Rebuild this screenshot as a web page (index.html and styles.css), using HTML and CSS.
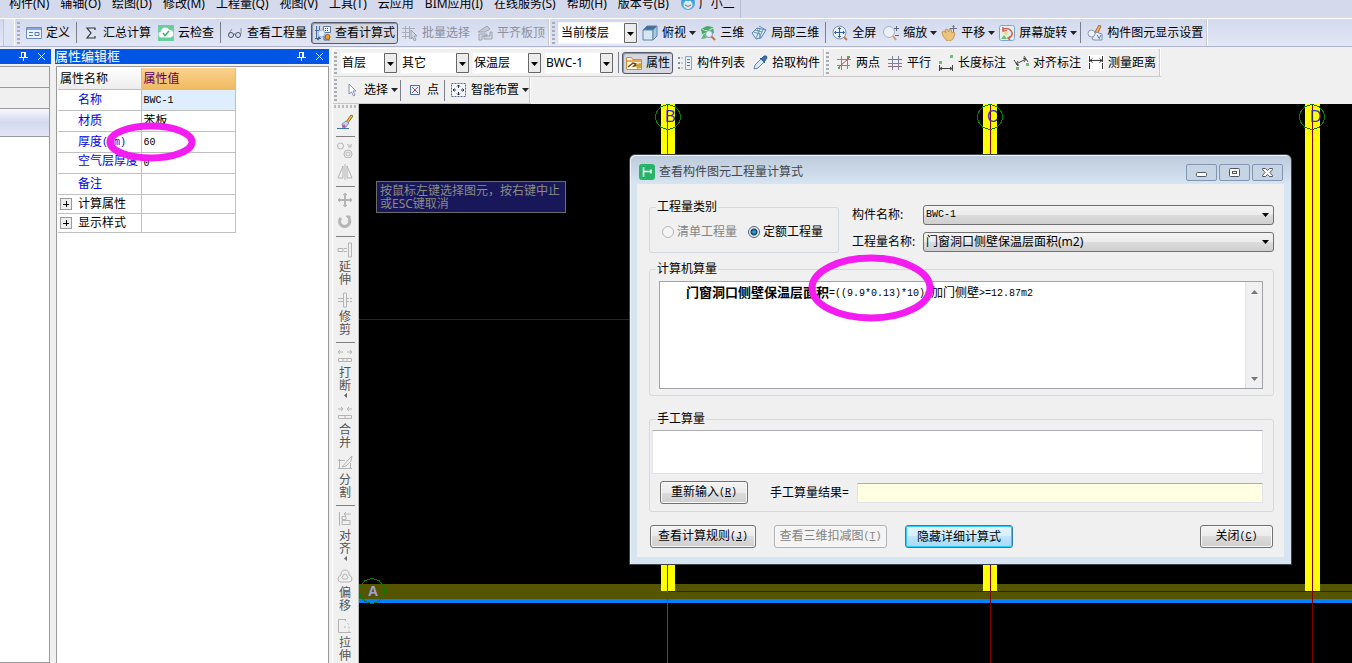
FILE: index.html
```html
<!DOCTYPE html>
<html lang="zh-CN">
<head>
<meta charset="utf-8">
<title>查看构件图元工程量计算式</title>
<link rel="stylesheet" href="styles.css">
</head>
<body>
<div class="app">
  <header class="menubar">
    <nav class="menu">
      <button>构件(N)</button><button>辅轴(O)</button><button>绘图(D)</button><button>修改(M)</button><button>工程量(Q)</button><button>视图(V)</button><button>工具(T)</button><button>云应用</button><button>BIM应用(I)</button><button>在线服务(S)</button><button>帮助(H)</button><button>版本号(B)</button>
      <button class="user"><svg class="i" viewBox="0 0 16 16"><circle cx="8" cy="8" r="7" fill="#4aa8e0"/><path d="M1 4l3 1M15 4l-3 1" stroke="#2f86c8" stroke-width="2"/><ellipse cx="8" cy="10" rx="4.500" ry="4" fill="#cfeaf8"/><path d="M5 10q3 3 6 0" fill="none" stroke="#d0504a"/><circle cx="6" cy="7" r="1" fill="#fff"/><circle cx="10" cy="7" r="1" fill="#fff"/></svg>广小二</button>
    </nav>
  </header>

  <div class="toolbar main-bar">
    <span class="stub"></span>
    <span class="grip"></span>
    <button class="tool"><svg class="i" viewBox="0 0 16 16"><path fill="#eef4fd" stroke="#6a8cc4" d="M.5 2.500h15v11H.5z"/><path d="M1 3h14v2H1z" fill="#86a8dc"/><path d="M3 7.500h4M3 10.500h4M9 7.500h4v3H9z" stroke="#5878a8" fill="none"/></svg>定义</button>
    <span class="sep"></span>
    <button class="tool"><svg class="i" viewBox="0 0 16 16"><path d="M12 5V3H4l4 5-4 5h8v-2" fill="none" stroke="#333" stroke-width="1.200"/></svg>汇总计算</button>
    <button class="tool"><svg class="i" viewBox="0 0 16 16"><path d="M0 0h16v16H0z" fill="#67cf9c"/><path d="M4 12.500a3 3 0 0 1-1-6 4.500 4.500 0 0 1 8.500-1.500 3.800 3.800 0 0 1 1 7.500z" fill="#fff"/><path d="M5 8l2 2.500L11 6" fill="none" stroke="#3fb27b" stroke-width="1.500"/></svg>云检查</button>
    <span class="sep"></span>
    <button class="tool"><svg class="i" viewBox="0 0 16 16"><path d="M5 4L1.500 9M14 3v6" stroke="#8890a0" fill="none"/><circle cx="4" cy="10" r="2.500" fill="#d6e2f2" stroke="#4a5468"/><circle cx="11" cy="10" r="2.500" fill="#d6e2f2" stroke="#4a5468"/><path d="M6.500 9.500q1-1 2 0" stroke="#4a5468" fill="none"/></svg>查看工程量</button>
    <button class="tool pressed"><svg class="i" viewBox="0 0 16 16"><path d="M1.500 1v13M0 13.500h6M4.500 1v4M0 5.500h5" stroke="#3f6ea8" fill="none"/><path d="M8.500 1.500h7v6h-7z" fill="#f3f6fb" stroke="#5878a8"/><path d="M10 3.500h1m1 0h1M10 5.500h1m1 0h1" stroke="#345"/><circle cx="6.500" cy="8.500" r="3.500" fill="#e3eefa" stroke="#9ab0d0"/><path d="M2.500 15l2-3" stroke="#36609c" stroke-width="2"/><path d="M9 11v4h6" stroke="#3f6ea8" fill="none"/><circle cx="12.500" cy="12" r="2.500" fill="#ee9a28" stroke="#9a5c18"/></svg>查看计算式</button>
    <button class="tool" disabled><svg class="i" viewBox="0 0 16 16"><path d="M0 3.500h13M0 7.500h8M0 11.500h8M3.500 1v13M7.500 1v13" stroke="#a9adbb" fill="none"/><path d="M9 5l6 6H12l2 4-2 .5-1.500-3.500L9 14z" fill="#d5d8e2" stroke="#9a9eac"/></svg>批量选择</button>
    <button class="tool" disabled><svg class="i" viewBox="0 0 16 16"><path d="M1 7l9-6 3 3-5 3z" fill="#c6cad6" stroke="#9ea2b0"/><path d="M2 9h8v2H5v4H2zM7 14h8V7h-2v4H7z" fill="#d4d7e0" stroke="#9ea2b0"/></svg>平齐板顶</button>
    <span class="edge"></span>
    <span class="grip"></span>
    <select class="combo floor" aria-label="楼层范围"><option>当前楼层</option></select>
    <button class="tool"><svg class="i" viewBox="0 0 16 16"><path d="M1 5l4-4h10l-4 4z" fill="#3f6f9e" stroke="#587c9c"/><path d="M1 5h10v10H1z" fill="#d5e7f3" stroke="#6288a6"/><path d="M11 5l4-4v10l-4 4z" fill="#a9c8dc" stroke="#6288a6"/></svg>俯视<svg class="caret" viewBox="0 0 7 4"><path d="M0 0h7L3.500 4z"/></svg></button>
    <button class="tool"><svg class="i" viewBox="0 0 16 16"><path d="M1 4l6-3 6 1 1 6-6 3-6-2z" fill="#45ad63"/><path d="M2 4q5 4 11-1M1 10q6-1 11-7" stroke="#bfe6c6" fill="none"/><circle cx="9" cy="9" r="3.500" fill="#e4f0fa" stroke="#8097b4"/><path d="M11.500 11.500L15 15" stroke="#bb7547" stroke-width="2"/><path d="M1 14l3-5 3 4z" fill="#5cb56e"/></svg>三维</button>
    <button class="tool"><svg class="i" viewBox="0 0 16 16"><path d="M1 8l5-5 9 2-5 8-5 1z" fill="#dbe9f4" stroke="#5a86ae"/><path d="M4 5l7 2M2.500 7L9 9M9 4l-4 9M12 5l-4 8M6 3l4 10M8 1l7 4" stroke="#6c95ba" fill="none"/></svg>局部三维</button>
    <span class="sep"></span>
    <button class="tool"><svg class="i" viewBox="0 0 16 16"><circle cx="7.500" cy="7.500" r="6.500" fill="#e9f1fa" stroke="#8594b0"/><path d="M7.500 2.500v10M2.500 7.500h10M6 4l1.500-1.500L9 4M6 11l1.500 1.500L9 11M4 6L2.500 7.500 4 9M11 6l1.500 1.500L11 9" stroke="#375f9e" fill="none"/><path d="M12 12l3 3" stroke="#c27a46" stroke-width="2"/></svg>全屏</button>
    <button class="tool"><svg class="i" viewBox="0 0 16 16"><circle cx="6" cy="7" r="5.500" fill="#eaf1fa" stroke="#a9b2c4"/><path d="M10 11l3 4" stroke="#d29a68" stroke-width="2"/><path d="M13.500 1v5M11 3.500h5M12 10.500h4" stroke="#59647c" fill="none"/></svg>缩放<svg class="caret" viewBox="0 0 7 4"><path d="M0 0h7L3.500 4z"/></svg></button>
    <button class="tool"><svg class="i" viewBox="0 0 16 16"><path d="M1 7l2-1 2 2-1-3 2-1 2 3 0-3h2l1 4 2-1 1 2-2 5-3 2H6l-4-5z" fill="#ecc27d" stroke="#c49a5c"/><path d="M12.500 0v7M9 3.500h7M11.500 1.500l1-1 1 1" stroke="#69707e" fill="none"/></svg>平移<svg class="caret" viewBox="0 0 7 4"><path d="M0 0h7L3.500 4z"/></svg></button>
    <button class="tool"><svg class="i" viewBox="0 0 16 16"><rect x=".5" y=".5" width="15" height="15" rx="2" fill="#e3f0ec" stroke="#78a8cc"/><path d="M3 5a6 5 0 1 1 7 8M4 2v4h4M12 11l-3 2 2 2" stroke="#e25b50" fill="none" stroke-width="1.500"/><circle cx="7" cy="8" r="2" fill="#f3d98e"/><path d="M2 14l3-4 3 4z" fill="#6fba75"/></svg>屏幕旋转<svg class="caret" viewBox="0 0 7 4"><path d="M0 0h7L3.500 4z"/></svg></button>
    <span class="sep"></span>
    <button class="tool"><svg class="i" viewBox="0 0 16 16"><path d="M8 7l4-7 2 1-3 7z" fill="#eeb061" stroke="#a86c38"/><path d="M5 14l4-7 6 2v6H7z" fill="#e6edf5" stroke="#8390a8"/><circle cx="4.500" cy="8.500" r="3.500" fill="#eaf4fa" stroke="#8e9ab0"/><path d="M10 10l2 3m2-3l-2 4" stroke="#4778b8"/></svg>构件图元显示设置</button>
    <span class="edge"></span>
  </div>

  <div class="workspace">
    <aside class="dock nav-dock">
      <h2 class="dock-title"><span></span><button aria-label="固定"><svg viewBox="0 0 9 9"><path d="M2.500 0v5M5.500 0v5M6.500 0v5M2 .5h5M0 5.500h9M4.500 6v3" stroke="#fff" fill="none"/></svg></button><button aria-label="关闭"><svg viewBox="0 0 9 9"><path d="M1 1l7 7M8 1L1 8" stroke="#fff" fill="none"/></svg></button></h2>
      <div class="nav-body"><button class="nav-row" aria-label="工程设置"></button><button class="nav-row" aria-label="绘图输入"></button><button class="nav-tools" aria-label="工具"></button><div class="nav-list"></div></div>
    </aside>

    <aside class="dock prop-dock">
      <h2 class="dock-title"><span>属性编辑框</span><button aria-label="固定"><svg viewBox="0 0 9 9"><path d="M2.500 0v5M5.500 0v5M6.500 0v5M2 .5h5M0 5.500h9M4.500 6v3" stroke="#fff" fill="none"/></svg></button><button aria-label="关闭"><svg viewBox="0 0 9 9"><path d="M1 1l7 7M8 1L1 8" stroke="#fff" fill="none"/></svg></button></h2>
      <div class="prop-body">
        <table class="props">
          <thead><tr><th>属性名称</th><th class="hot">属性值</th></tr></thead>
          <tbody>
            <tr><td class="key">名称</td><td class="selected"><span class="mono">BWC-1</span></td></tr>
            <tr><td class="key">材质</td><td>苯板</td></tr>
            <tr><td class="key">厚度<span class="mono">(mm)</span></td><td><span class="mono">60</span></td></tr>
            <tr><td class="key air">空气层厚度</td><td><span class="mono">0</span></td></tr>
            <tr><td class="key">备注</td><td></td></tr>
            <tr class="group"><td><button class="plus" aria-label="展开计算属性"></button>计算属性</td><td></td></tr>
            <tr class="group"><td><button class="plus" aria-label="展开显示样式"></button>显示样式</td><td></td></tr>
          </tbody>
        </table>
        <svg class="mark mark-prop" viewBox="0 0 90 40"><ellipse cx="45" cy="20" rx="41" ry="16"/></svg>
      </div>
    </aside>

    <main class="work">
      <div class="toolbar sub-bar">
        <span class="grip"></span>
        <select class="combo w-s" aria-label="楼层"><option>首层</option></select>
        <select class="combo w-m" aria-label="构件类型"><option>其它</option></select>
        <select class="combo w-m" aria-label="构件"><option>保温层</option></select>
        <select class="combo w-m" aria-label="名称"><option>BWC-1</option></select>
        <span class="sep"></span>
        <button class="tool pressed"><svg class="i" viewBox="0 0 16 16"><path d="M.5 2.500h5l1 2h9v10H.5z" fill="#fff6dc" stroke="#d08a38"/><path d="M1 5h14v2H1z" fill="#f0a850"/><path d="M2 12l5-4 3 1-2 2 5-1" stroke="#6a4a24" fill="none" stroke-width="1.500"/><path d="M10 9l5-1v5l-4 1z" fill="#c9a63c"/></svg>属性</button>
        <button class="tool"><svg class="i" viewBox="0 0 16 16"><path d="M1 2h2v2H1zM1 7h2v2H1zM1 12h2v2H1z" fill="#7d8cab"/><path d="M4 3h2M4 8h2M4 13h2" stroke="#9aa6be"/><path d="M8.500 1.500h6v13h-6z" fill="#e8eff9" stroke="#8ea6cc"/><path d="M10 4.500h3M10 7.500h3M10 10.500h3" stroke="#5d7fb8"/></svg>构件列表</button>
        <button class="tool"><svg class="i" viewBox="0 0 16 16"><path d="M2 14l1-4 6-6 3 3-6 6z" fill="#dbe8f5" stroke="#5f86b8"/><path d="M8 3l5 5M9 4l3-3q3-1 3 2l-3 4z" fill="#3e6fae" stroke="#2f5d9c"/></svg>拾取构件</button>
        <span class="edge"></span>
        <span class="grip"></span>
        <button class="tool"><svg class="i" viewBox="0 0 16 16"><path d="M1 4.500h14M1 10.500h13M5.500 1v14M11.500 1v13" stroke="#8084a8" fill="none"/><path d="M2 13L14 2" stroke="#b85048"/><path d="M2 12h2v2H2zM12 1h2v2h-2z" fill="#57a35b"/></svg>两点</button>
        <button class="tool"><svg class="i" viewBox="0 0 16 16"><path d="M1 4.500h14M1 11.500h14" stroke="#a0606c"/><path d="M1 8.500h14M5.500 1v14M11.500 1v14" stroke="#7a82ac" fill="none"/></svg>平行</button>
        <button class="tool"><svg class="i" viewBox="0 0 16 16"><path d="M1.500 10v6M14.500 10v6M2 13.500h12M4 12l-2 1.500L4 15M12 12l2 1.500-2 1.500" stroke="#444" fill="none"/><path d="M1 6h3v3H1zM12 0h3v3h-3z" fill="#69c274"/></svg>长度标注</button>
        <button class="tool"><svg class="i" viewBox="0 0 16 16"><path d="M1 5l4 6M11 1l4 6M3 9l10-5M5 6L3 9l3 1M11 7l2-3-3-1" stroke="#444" fill="none"/><path d="M3 12h3v3H3zM13 8h3v3h-3z" fill="#69c274"/></svg>对齐标注</button>
        <button class="tool"><svg class="i" viewBox="0 0 16 16"><path d="M0 0h16v16H0z" fill="#fff"/><path d="M1.500 1v14M14.500 1v14" stroke="#333" stroke-dasharray="6 1"/><path d="M2 5.500h12M4.500 3.500L2 5.500l2.500 2M11.500 3.500l2.500 2-2.500 2" stroke="#333" fill="none"/></svg>测量距离</button>
        <span class="edge"></span>
      </div>
      <div class="toolbar draw-bar">
        <span class="grip"></span>
        <button class="tool"><svg class="i" viewBox="0 0 16 16"><path d="M5 2v10l2.500-2 2 4 1.500-1-2-4h3z" fill="#fff" stroke="#8390b8"/></svg>选择<svg class="caret" viewBox="0 0 7 4"><path d="M0 0h7L3.500 4z"/></svg></button>
        <span class="sep"></span>
        <button class="tool"><svg class="i" viewBox="0 0 16 16"><path d="M3.500 3.500h9v9h-9z" fill="#eef" stroke="#5468a8"/><path d="M5 5l6 6M11 5l-6 6" stroke="#5468a8"/><path d="M7 7h2v2H7z" fill="#d84040"/></svg>点</button>
        <span class="sep"></span>
        <button class="tool"><svg class="i" viewBox="0 0 16 16"><path d="M.5 1.500h14v13H.5z" fill="#f4f7fb" stroke="#556a8c" stroke-dasharray="2 1"/><path d="M7.500 3v3M6 4.500L7.500 3 9 4.500M7.500 13v-3M6 11.500L7.500 13 9 11.500M2 8h3M3.500 6.500L2 8l1.500 1.500M13 8h-3M11.500 6.500L13 8l-1.500 1.500" stroke="#2c3440" fill="none"/></svg>智能布置<svg class="caret" viewBox="0 0 7 4"><path d="M0 0h7L3.500 4z"/></svg></button>
        <span class="edge"></span>
      </div>

      <div class="stage">
        <div class="edit-bar">
          <span class="hgrip"></span>
          <button class="edit" aria-label="格式刷"><svg class="i" viewBox="0 0 16 16"><path d="M9 8l5-7 2 1-5 7z" fill="#f0c040" stroke="#907020"/><path d="M5 10l4-3 3 2-3 4-3 1z" fill="#c8d4ea" stroke="#8090b0"/><circle cx="7" cy="12" r="1.500" fill="#cf4bb0"/><path d="M0 14.500h12" stroke="#3674b4"/></svg></button>
          <hr>
          <button class="edit" aria-label="复制"><svg class="i g" viewBox="0 0 16 16"><circle cx="3.500" cy="4" r="3"/><circle cx="11" cy="12" r="4"/><circle cx="11" cy="12" r="2"/><path d="M10 2l4 3M14 2v3h-3"/></svg></button>
          <button class="edit" aria-label="镜像"><svg class="i g" viewBox="0 0 16 16"><path d="M6 2v12H1zM10 2v12h5zM8 0v16"/></svg></button>
          <hr>
          <button class="edit" aria-label="移动"><svg class="i g" viewBox="0 0 16 16"><path stroke-width="2" d="M8 2v12M2 8h12"/><path d="M6 3l2-2 2 2M6 13l2 2 2-2M3 6L1 8l2 2M13 6l2 2-2 2"/></svg></button>
          <button class="edit" aria-label="旋转"><svg class="i g" viewBox="0 0 16 16"><path stroke-width="3" d="M4 4a5 5 0 1 0 8 1"/><path fill="#b4b4b4" d="M9 2h4v4z"/></svg></button>
          <hr>
          <button class="edit"><svg class="i g" viewBox="0 0 16 16"><path d="M1 6.500h5v3H1zM7 6.500h3M7 9.500h3"/><path d="M11.500 1v14h3V1z"/></svg><span>延</span><span>伸</span></button>
          <button class="edit"><svg class="i g" viewBox="0 0 16 16"><path d="M1 6.500h5M1 9.500h5M10 6.500h2m1 0h2M10 9.500h2m1 0h2M6.500 1v14h3V1z"/></svg><span>修</span><span>剪</span></button>
          <hr>
          <button class="edit"><svg class="i g" viewBox="0 0 16 16"><path d="M1 4h5M3 2L1 4l2 2M10 4h5M13 2l2 2-2 2M1.500 10.500h13v3h-13zM6 10v4M10 10v4"/></svg><span>打</span><span>断</span><svg class="side" viewBox="0 0 3 7"><path d="M3 1v5L0 3.500z"/></svg></button>
          <button class="edit"><svg class="i g" viewBox="0 0 16 16"><path d="M1 4h5M4 2l2 2-2 2M10 4h5M12 2l-2 2 2 2M1.500 10.500h13v3h-13zM8 10v4"/></svg><span>合</span><span>并</span></button>
          <button class="edit"><svg class="i g" viewBox="0 0 16 16"><path d="M1 5.500h7M2.500 4v10M1 13.500h14M5 12l7-8 3-3-1 5-5 5zM13.500 8v6"/></svg><span>分</span><span>割</span></button>
          <hr>
          <button class="edit"><svg class="i g" viewBox="0 0 16 16"><path d="M2.500 1v14M5 8.500h4v-3H5zM5 9.500h8v4H5zM7 3h7M9 1L7 3l2 2"/></svg><span>对</span><span>齐</span><svg class="side" viewBox="0 0 3 7"><path d="M3 1v5L0 3.500z"/></svg></button>
          <button class="edit"><svg class="i g" viewBox="0 0 16 16"><path d="M1 11q0-3 3-4 0-5 4-5t4 5q3 1 3 4 0 3-3 3H4q-3 0-3-3z"/><path d="M5 10q0-1 1-2 0-2 2-2t2 2q1 1 1 2l-1 1H6z"/></svg><span>偏</span><span>移</span></button>
          <button class="edit"><svg class="i g" viewBox="0 0 16 16"><path d="M9 1.500H1.500v13H14"/><path stroke-dasharray="2 2" d="M8 2l4 5v7M7 9h4"/></svg><span>拉</span><span>伸</span></button>
        </div>

        <section class="canvas">
          <svg class="drawing" width="993" height="559" viewBox="0 0 993 559" shape-rendering="crispEdges">
            <path d="M302 0h14v487h-14zM624 0h14v487h-14zM946 0h15v487h-15z" fill="#ff0"/>
            <path d="M0 480h302v15H0zM316 480h308v15H316zM638 480h308v15H638zM961 480h32v15h-32zM302 487h14v8h-14zM624 487h14v8h-14zM946 487h15v8h-15z" fill="#550"/>
            <path d="M0 495h993v4H0z" fill="#0080ff"/>
            <path d="M0 215.500h300M309 487.500h684M631.500 0v559M953.500 0v559" stroke="#800000"/>
            <path d="M308.500 0v487M0 487.500h309" stroke="#f00"/>
            <path d="M308.500 488v71" stroke="green"/>
            <g fill="none" stroke="#008000">
              <path id="axis" d="M309 .5l7 2 4 5 2 5.500-2 5.500-4 5-7 2-7-2-4-5-2-5.500 2-5.500 4-5z"/>
              <use href="#axis" x="322"/><use href="#axis" x="644"/><use href="#axis" x="-296" y="474"/>
            </g>
            <g class="axis-text"><text x="306" y="18">B</text><text x="628" y="18">C</text><text x="951" y="18">D</text><text x="9" y="492" class="axis-a">A</text></g>
          </svg>
          <p class="hint">按鼠标左键选择图元，按右键中止<br>或ESC键取消</p>

          <section class="dialog" role="dialog" aria-labelledby="dlg-title">
            <header class="caption">
              <svg class="i" viewBox="0 0 16 16"><rect width="16" height="16" rx="3" fill="#25b567"/><path d="M4.500 3v10M5 7.500h7M12 5.500v4" stroke="#fff" fill="none" stroke-width="1.500"/></svg>
              <h1 id="dlg-title">查看构件图元工程量计算式</h1>
              <button aria-label="最小化"><svg viewBox="0 0 13 11"><rect x="1.500" y="5.500" width="10" height="4" rx="1"/></svg></button>
              <button aria-label="最大化"><svg viewBox="0 0 13 11"><rect x="1.500" y="1.500" width="10" height="8" rx="1"/><rect x="4.500" y="4.500" width="4" height="2"/></svg></button>
              <button aria-label="关闭窗口"><svg viewBox="0 0 13 11"><path d="M1.500 1.500h3l2 2 2-2h3v1L9 5.500l2.500 3v1h-3l-2-2-2 2h-3v-1L4 5.500l-2.500-3z"/></svg></button>
            </header>
            <div class="dlg-body">
              <div class="top-row">
                <fieldset class="kind">
                  <legend>工程量类别</legend>
                  <label class="off"><input type="radio" name="kind" disabled>清单工程量</label>
                  <label><input type="radio" name="kind" checked>定额工程量</label>
                </fieldset>
                <div class="fields">
                  <label for="comp">构件名称:</label><select id="comp" class="mono"><option>BWC-1</option></select>
                  <label for="qty">工程量名称:</label><select id="qty"><option>门窗洞口侧壁保温层面积(m2)</option></select>
                </div>
              </div>
              <fieldset class="auto">
                <legend>计算机算量</legend>
                <div class="result">
                  <p><b>门窗洞口侧壁保温层面积</b><span class="mono">=((9.9*0.13)*10)&lt;</span>加门侧壁<span class="mono">&gt;=12.87m2</span></p>
                  <div class="scroll"><button aria-label="向上"><svg viewBox="0 0 7 4"><path d="M0 4h7L3.500 0z"/></svg></button><button aria-label="向下"><svg viewBox="0 0 7 4"><path d="M0 0h7L3.500 4z"/></svg></button></div>
                </div>
              </fieldset>
              <fieldset class="manual">
                <legend>手工算量</legend>
                <textarea aria-label="手工算量"></textarea>
                <div class="manual-row"><button class="btn">重新输入<span class="mono">(<u>R</u>)</span></button><label for="res">手工算量结果=</label><input id="res" type="text" readonly></div>
              </fieldset>
              <footer class="actions">
                <button class="btn b1">查看计算规则<span class="mono">(<u>J</u>)</span></button>
                <button class="btn b2" disabled>查看三维扣减图<span class="mono">(<u>T</u>)</span></button>
                <button class="btn b3 primary">隐藏详细计算式</button>
                <button class="btn b4">关闭<span class="mono">(<u>C</u>)</span></button>
              </footer>
            </div>
            <svg class="mark mark-dlg" viewBox="0 0 126 68"><ellipse cx="63" cy="34" rx="59" ry="30"/></svg>
          </section>
        </section>
      </div>
    </main>
  </div>
</div>
</body>
</html>
```
FILE: styles.css
```css
* { box-sizing: border-box; }
body {
  margin: 0;
  font: 12px/16px "Noto Sans", "Noto Sans CJK SC", sans-serif;
  color: #000;
  background: #f0f0f0;
}
button, select, input, textarea { font: inherit; color: inherit; margin: 0; }
button { padding: 0; border: 0; background: none; white-space: nowrap; }
svg { display: block; flex: none; }
.i { width: 16px; height: 16px; }
.mono { font-family: "Liberation Mono", monospace; font-size: 10px; }
span.mono { vertical-align: 1px; }
.app { display: flex; flex-direction: column; height: 100vh; overflow: hidden; }

/* menu */
.menubar { height: 18px; overflow: hidden; background: #d4d9ec; flex: none; }
.menu { display: flex; gap: 11px; height: 23px; margin-top: -5px; padding-left: 9px; align-items: flex-start; }
.menu button { height: 17px; line-height: 17px; }
.menu .user { display: flex; gap: 3px; height: 23px; padding-right: 5px; border-right: 1px solid #bcc0d0; }

/* toolbars */
.toolbar { display: flex; align-items: center; height: 28px; flex: none; }
.main-bar { background: linear-gradient(#d3d9ed, #e3e8f7); border-top: 1px solid #fff; border-bottom: 1px solid #b0b3cf; height: 29px; }
.stub { width: 12px; height: 27px; margin-left: 3px; border-left: 1px solid #c3c7d8; border-right: 1px solid #fff; background: #dfe4f4; }
.grip { width: 3px; height: 22px; margin: 0 3px 0 1px; background: repeating-linear-gradient(#a9abb5 0 2px, transparent 2px 4px); }
.main-bar .grip { margin: 0 2px; }
.edge { align-self: stretch; width: 2px; border-left: 1px solid #c9c9ce; border-right: 1px solid #fff; }
.tool { display: flex; align-items: center; height: 22px; padding: 0 3px 0 4px; }
.tool .i { margin-right: 4px; }
.tool .caret { width: 7px; height: 4px; margin: 0 -3px 0 3px; fill: #222; }
.tool:disabled { color: #8b8f9d; }
.tool.pressed { margin-left: 1px; padding: 0 2px 0 3px; border: 1px solid #555a68; border-radius: 3px; background: #d5d8e2; box-shadow: inset 1px 1px 1px #8d909c; }
.sep { width: 1px; height: 21px; margin: 0 2px 0 3px; background: #7c7f8c; }
.combo {
  appearance: none; height: 22px; padding: 0 14px 0 1px; border: 1px solid #f4f4f4; border-radius: 0;
  background: #fff url("data:image/svg+xml,%3Csvg xmlns='http://www.w3.org/2000/svg' width='13' height='20'%3E%3Cpath d='M.5.5h12v19H.5z' fill='%23ececec' stroke='%23666'/%3E%3Cpath d='M3 9h7l-3.500 4z'/%3E%3C/svg%3E") right center no-repeat;
}
.main-bar .combo { width: 80px; margin-left: 1px; padding-left: 2px; }
.w-s { width: 58px; margin-right: 2px; }
.w-m { width: 70px; margin-right: 2px; }
.sub-bar .sep, .draw-bar .sep { margin-left: 2px; }

/* workspace */
.workspace { display: flex; flex: 1; min-height: 0; padding-top: 1px; }
.dock { display: flex; flex-direction: column; flex: none; padding-top: 1px; }
.nav-dock { width: 51px; margin-right: 4px; }
.prop-dock { width: 274px; }
.dock-title { display: flex; align-items: center; gap: 9px; height: 15px; margin: 0 0 2px; padding-right: 5px; background: #0055e5; color: #fff; font-size: 13px; line-height: 15px; font-weight: normal; flex: none; }
.dock-title span { flex: 1; }
.dock-title svg { width: 9px; height: 9px; }
.nav-body { display: flex; flex-direction: column; flex: 1; border: 1px solid #999; border-left: 0; margin-right: 1px; background: #f0f0f0; }
.nav-row { height: 21px; border-bottom: 1px solid #999; background: #f0f0f0; }
.nav-tools { height: 28px; border-bottom: 1px solid #999; background: linear-gradient(#f8f9fd, #d3d9ee 50%, #e2e6f5); }
.nav-list { flex: 1; background: #fff; }
.prop-body { position: relative; flex: 1; margin-left: 1px; padding: 1px; border: 1px solid #9a9a9a; border-bottom: 0; background: #fff; }
.props { width: 178px; border-collapse: collapse; table-layout: fixed; line-height: 15px; }
.props th, .props td { height: 21px; padding: 0 0 0 2px; border: 1px solid #c0c0c0; border-top: 0; border-left: 0; font-weight: normal; text-align: left; white-space: nowrap; overflow: hidden; }
.props th:first-child, .props td:first-child { width: 83px; }
.props th { background: linear-gradient(#fff, #ececec); }
.props .hot { background: linear-gradient(#fad28e, #efba60); color: #5c0060; }
.props .key { padding-left: 20px; color: #0000e8; }
.props .air { vertical-align: top; }
.props .selected { background: #deeeff; }
.props .group td { height: 19px; }
.plus { width: 12px; height: 12px; margin: 0 6px 0 0; border: 1px solid #999; vertical-align: -1px; background: linear-gradient(#000, #000) center / 6px 1px no-repeat, linear-gradient(#000, #000) center / 1px 6px no-repeat, #eee; }
.mark { position: absolute; fill: none; stroke: #f41cf0; stroke-width: 7px; pointer-events: none; }
.mark-prop { width: 90px; height: 40px; left: 49px; top: 55px; }

.work { display: flex; flex-direction: column; flex: 1; min-width: 0; margin-left: 3px; border-left: 1px solid #fff; }
.sub-bar { align-self: flex-start; border-top: 1px solid #fff; border-bottom: 1px solid #c9c9c9; height: 29px; }
.draw-bar { align-self: flex-start; height: 27px; border-bottom: 1px solid #c9c9c9; }
.stage { display: flex; flex: 1; min-height: 0; }

/* vertical edit toolbar */
.edit-bar { display: flex; flex-direction: column; gap: 6px; width: 26px; flex: none; overflow: hidden; border-right: 1px solid #bbb; }
.hgrip { height: 3px; margin: 1px 1px 0; background: repeating-linear-gradient(90deg, #bbb 0 2px, transparent 2px 4px); flex: none; }
.edit-bar hr { width: 19px; height: 1px; margin: 0 auto -1px; border: 0; background: #808080; flex: none; }
.edit { display: flex; flex-direction: column; align-items: center; flex: none; line-height: 13px; color: #555; padding-right: 1px; }
.edit .i + span { margin-top: 2px; }
.edit .g { fill: none; stroke: #b4b4b4; }
.side { width: 3px; height: 7px; fill: #666; }

/* drawing canvas */
.canvas { position: relative; flex: 1; min-width: 0; overflow: hidden; background: #000; }
.axis-text { font: 16px "Liberation Sans", sans-serif; fill: #3030c8; }
.axis-a { fill: #a0a0e0; font-weight: bold; font-size: 14px; }
.hint { position: absolute; left: 17px; top: 77px; width: 190px; margin: 0; padding: 2px 3px; border: 1px solid #6b6b6b; background: #17175a; color: #8c8c80; line-height: 13px; white-space: nowrap; }

/* dialog */
.dialog { position: absolute; left: 270px; top: 50px; width: 663px; padding: 0 7px 7px 7px; border: 1px solid #3e4248; border-radius: 6px 6px 0 0; background: linear-gradient(#bccada, #d7e4f2 29px); box-shadow: inset 1px 1px 0 #eef4fa; }
.caption { display: flex; align-items: center; gap: 2px; height: 29px; padding: 5px 1px 0 2px; }
.caption h1 { flex: 1; margin: 0 0 0 2px; font-size: 12px; font-weight: normal; color: #3d4650; }
.caption button { display: flex; align-items: center; justify-content: center; width: 31px; height: 17px; border: 1px solid #8495b4; border-radius: 2px; background: #c6d4e4; }
.caption button svg { width: 13px; height: 11px; fill: #fff; stroke: #4c5668; }
.dlg-body { padding: 16px 10px 9px 12px; background: #f0f0f0; }
fieldset { min-width: 0; margin: 0; border: 1px solid #d0dae2; border-radius: 3px; }
legend { height: 14px; line-height: 14px; padding: 0 1px; }
.top-row { display: flex; gap: 13px; }
.kind { display: flex; gap: 11px; flex: none; width: 190px; padding: 10px 0 12px 12px; }
.kind legend { margin-left: -6px; }
.kind label { display: flex; align-items: center; gap: 3px; }
.kind .off { color: #838383; }
.kind input { appearance: none; width: 12px; height: 12px; border: 1px solid #b5b5b5; border-radius: 50%; background: #f4f4f4; }
.kind input:checked { border-color: #56606c; background: radial-gradient(circle, #2a9cd4 0 1px, #123c64 3px, #e8eef4 4px); }
.fields { display: grid; grid-template-columns: 71px 1fr; gap: 7px 0; flex: 1; padding-top: 5px; grid-auto-rows: 20px; align-content: start; align-items: center; }
.fields select {
  appearance: none; width: 100%; height: 20px; padding: 0 20px 0 2px; border: 1px solid #707070; border-radius: 3px;
  background: url("data:image/svg+xml,%3Csvg xmlns='http://www.w3.org/2000/svg' width='7' height='4'%3E%3Cpath d='M0 0h7L3.500 4z'/%3E%3C/svg%3E") right 4px center no-repeat, linear-gradient(#f3f3f3, #ebebeb 50%, #dcdcdc 50%, #cfcfcf);
}
.auto { margin-top: 9px; padding: 5px 10px 6px 9px; }
.auto legend { margin-left: -3px; }
.result { display: flex; height: 108px; border: 1px solid #a0a3a8; background: #fff; }
.result p { flex: 1; margin: 0; padding: 2px 0 0 26px; white-space: nowrap; }
.result b { font-size: 13px; }
.scroll { display: flex; flex-direction: column; justify-content: space-between; width: 17px; background: #f0f0f0; border-left: 1px solid #e3e3e3; }
.scroll button { display: flex; align-items: center; justify-content: center; height: 19px; }
.scroll svg { width: 7px; height: 4px; fill: #777; }
.manual { margin-top: 16px; padding: 4px 10px 7px 2px; }
.manual legend { margin-left: 4px; }
.manual textarea { display: block; width: 100%; height: 44px; border: 1px solid #e2e3ea; border-top-color: #abadb3; resize: none; background: #fff; }
.manual-row { display: flex; align-items: center; margin: 7px 0 0 8px; }
.manual-row label { margin: 0 10px 0 22px; width: 77px; white-space: nowrap; }
.manual-row input { flex: 1; min-width: 0; height: 20px; border: 1px solid #e2e3ea; border-top-color: #abadb3; background: #ffffe1; }
.btn { height: 23px; min-width: 88px; border: 1px solid #707070; border-radius: 3px; background: linear-gradient(#f3f3f3, #ebebeb 50%, #dcdcdc 50%, #cfcfcf); box-shadow: inset 0 0 0 1px #fafafa; }
.btn:disabled { border-color: #adb2b5; background: #f4f4f4; color: #838383; }
.btn.primary { border-color: #2c7fb0; background: linear-gradient(#e5f4fc, #d6effc 50%, #bde6fd 50%, #a7d9f5); box-shadow: inset 0 0 0 1px #30cdf8; }
.actions { display: flex; margin-top: 13px; padding: 0 1px; gap: 18px; }
.b1 { width: 106px; }
.b2 { width: 113px; }
.b3 { width: 108px; }
.b4 { min-width: 73px; margin-left: auto; }
.mark-dlg { width: 126px; height: 68px; left: 178px; top: 99px; }
```
